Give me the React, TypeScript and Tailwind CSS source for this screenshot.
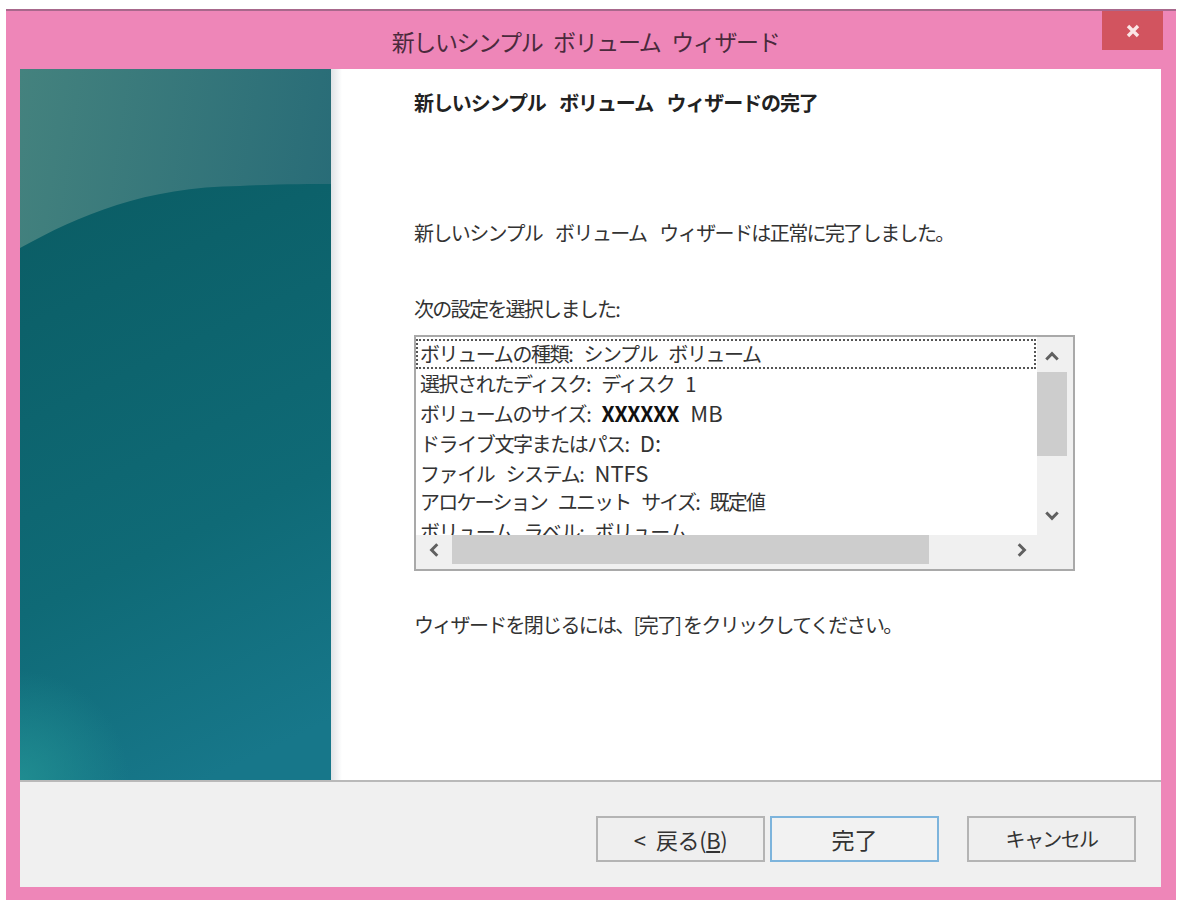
function SidebarArt() {
  return (
    <svg className="block h-full w-full" viewBox="0 0 311 711" preserveAspectRatio="none">
      <defs>
        <linearGradient id="sky" x1="0" y1="0" x2="1" y2="0.35">
          <stop offset="0" stopColor="#44827e" />
          <stop offset="1" stopColor="#276b77" />
        </linearGradient>
        <linearGradient id="sea" x1="0.35" y1="0" x2="0.6" y2="1">
          <stop offset="0" stopColor="#0b5e66" />
          <stop offset="0.6" stopColor="#0f6a76" />
          <stop offset="1" stopColor="#17778a" />
        </linearGradient>
        <radialGradient id="glow" cx="0" cy="1" r="0.35">
          <stop offset="0" stopColor="#218f92" stopOpacity="0.9" />
          <stop offset="1" stopColor="#218f92" stopOpacity="0" />
        </radialGradient>
      </defs>
      <rect width="311" height="711" fill="url(#sky)" />
      <path d="M0 179C60 146 125 118 220 117C260 115 290 115 311 115V711H0Z" fill="url(#sea)" />
      <rect y="400" width="311" height="311" fill="url(#glow)" />
    </svg>
  );
}

function Chevron({ d }: { d: string }) {
  return (
    <svg className="h-4 w-4" viewBox="0 0 14 14" fill="none" stroke="#606060" strokeWidth="2.6">
      <path d={d} />
    </svg>
  );
}

function WizardButton({ children, primary }: { children: React.ReactNode; primary?: boolean }) {
  return (
    <button
      className={
        primary
          ? 'flex h-[46px] w-[169px] items-center justify-center border-2 border-[#7db4dc] bg-[#f2f2f2] text-[#333]'
          : 'flex h-[46px] w-[169px] items-center justify-center border-2 border-[#b4b4b4] bg-[#efefef] text-[#333]'
      }
    >
      {children}
    </button>
  );
}

export default function App() {
  return (
    <div className="h-[901px] w-[1179px] overflow-hidden bg-white pl-[6px] pt-[9px] font-['Noto_Sans_CJK_JP',sans-serif]">
      <div className="flex h-[891px] w-[1170px] flex-col border-t-2 border-[#a8688c] bg-[#ee86b8] pb-[13px] pl-[14px] pr-[15px]">
        <div className="relative flex h-[58px] shrink-0 items-center justify-center pr-[10px] pt-[2px] text-[23px] tracking-[-0.06em] text-[#4a2a3c] [word-spacing:7px]">
          新しいシンプル ボリューム ウィザード
          <div className="absolute right-[-2px] top-0 flex h-[39px] w-[61px] items-center justify-center bg-[#d2545f]">
            <svg className="h-4 w-4" viewBox="0 0 16 16" fill="none" stroke="#fbe6e6" strokeWidth="3.4">
              <path d="M3 3l10 10M13 3L3 13" />
            </svg>
          </div>
        </div>

        <div className="flex min-h-0 flex-1 flex-col bg-white">
          <div className="flex h-[711px] shrink-0">
            <div className="h-full w-[311px] shrink-0">
              <SidebarArt />
            </div>
            <div className="h-full w-[11px] shrink-0 bg-gradient-to-r from-[#dfe3e6] to-white" />
            <div className="flex-1 pl-[72px] text-[20px] text-[#333]">
              <h1 className="mt-[19px] h-[30px] text-[20px] font-bold leading-[30px] tracking-[-0.055em] text-[#222] [word-spacing:10px]">
                新しいシンプル ボリューム ウィザードの完了
              </h1>
              <p className="mt-[100px] h-[30px] leading-[30px] tracking-[-0.08em] [word-spacing:10px]">
                新しいシンプル ボリューム ウィザードは正常に完了しました。
              </p>
              <p className="mt-[46px] h-[30px] leading-[30px] tracking-[-0.085em]">次の設定を選択しました:</p>
              <div className="mt-[11px] flex h-[236px] w-[661px] flex-col border-2 border-[#a9a9a9] bg-[#f0f0f0]">
                <div className="flex min-h-0 flex-1">
                  <div className="flex-1 overflow-hidden whitespace-nowrap bg-white pt-[2px] leading-[29.7px] tracking-[-0.07em] [word-spacing:8px]">
                    <div className="h-[29.7px] w-[620px] border-2 border-dotted border-[#555] pl-[2px] leading-[26px]">
                      ボリュームの種類: シンプル ボリューム
                    </div>
                    <div className="h-[29.7px] pl-[4px]">選択されたディスク: ディスク 1</div>
                    <div className="h-[29.7px] pl-[4px]">
                      ボリュームのサイズ: <b className="text-[21px] tracking-[-0.01em] text-[#111]">XXXXXX</b>{' '}
                      <span className="text-[22px] tracking-normal">MB</span>
                    </div>
                    <div className="h-[29.7px] pl-[4px]">
                      ドライブ文字またはパス: <span className="text-[22px] tracking-normal">D:</span>
                    </div>
                    <div className="h-[29.7px] pl-[4px]">
                      ファイル システム: <span className="text-[22px] tracking-normal">NTFS</span>
                    </div>
                    <div className="h-[29.7px] pl-[4px] tracking-[-0.09em]">アロケーション ユニット サイズ: 既定値</div>
                    <div className="h-[29.7px] pl-[4px]">ボリューム ラベル: ボリューム</div>
                  </div>
                  <div className="flex w-[36px] shrink-0 flex-col bg-[#f0f0f0] pr-[6px]">
                    <div className="flex h-[35px] items-center justify-center pt-[2px]">
                      <Chevron d="M2 10l5-5 5 5" />
                    </div>
                    <div className="h-[84px] bg-[#cdcdcd]" />
                    <div className="flex flex-1 items-center justify-center pt-[40px]">
                      <Chevron d="M2 4l5 5 5-5" />
                    </div>
                  </div>
                </div>
                <div className="mb-[5px] flex h-[29px] shrink-0 items-center">
                  <div className="flex w-[36px] items-center justify-center pl-[2px]">
                    <Chevron d="M9 2L4 7l5 5" />
                  </div>
                  <div className="h-full w-[477px] bg-[#cdcdcd]" />
                  <div className="flex flex-1 items-center justify-end pr-[44px]">
                    <Chevron d="M5 2l5 5-5 5" />
                  </div>
                </div>
              </div>
              <p className="mt-[39px] h-[30px] leading-[30px] tracking-[-0.085em]">
                ウィザードを閉じるには、[完了] をクリックしてください。
              </p>
            </div>
          </div>
          <div className="flex flex-1 items-start justify-end border-t-2 border-[#b9b9b9] bg-[#f0f0f0] pr-[25px] pt-[34px]">
            <WizardButton>
              <span className="text-[22px] tracking-[-0.02em] [word-spacing:6px]">
                &lt; 戻る(<span className="underline">B</span>)
              </span>
            </WizardButton>
            <div className="w-[5px]" />
            <WizardButton primary>
              <span className="text-[23px]">完了</span>
            </WizardButton>
            <div className="w-[28px]" />
            <WizardButton>
              <span className="text-[20px] tracking-[-0.08em]">キャンセル</span>
            </WizardButton>
          </div>
        </div>
      </div>
    </div>
  );
}
